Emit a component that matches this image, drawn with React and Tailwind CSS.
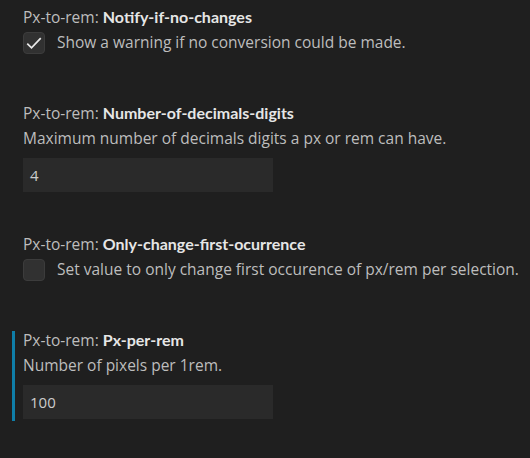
import React from "react";

const font = { fontFamily: '"Open Sans", "Noto Sans", sans-serif' };
const boldFont = { fontFamily: 'Lato, "Open Sans", sans-serif' };

const Check = ({ checked }) => (
  <div className="w-[22px] h-[22px] shrink-0 rounded-[4px] bg-[#313131] border border-[#3c3c3c] flex items-center justify-center">
    {checked && (
      <svg width="18" height="18" viewBox="0 0 16 16" fill="none">
        <path d="M2 8.5l3.8 3.8L14 3.6" stroke="#e8e8e8" strokeWidth="1.5" />
      </svg>
    )}
  </div>
);

const Title = ({ name }) => (
  <div className="text-[15.5px] leading-[20px] text-[#bdbdbd] whitespace-nowrap">
    Px-to-rem:{" "}
    <span className="font-bold text-[16px] text-[#e6e6e6]" style={boldFont}>
      {name}
    </span>
  </div>
);

const CheckSetting = ({ name, label, checked }) => (
  <div className="pl-[23px] pt-[7px] h-[96px]">
    <Title name={name} />
    <div className="flex items-center gap-[12px] mt-[4px]">
      <Check checked={checked} />
      <span className="text-[15.5px] text-[#bdbdbd] whitespace-nowrap">{label}</span>
    </div>
  </div>
);

const InputSetting = ({ name, desc, value, focused }) => (
  <div className="relative pl-[23px] pt-[7px] h-[131px]">
    {focused && <div className="absolute left-[12px] top-[8px] w-[3px] h-[90px] bg-[#0f7ea8]" />}
    <Title name={name} />
    <div className="text-[15.5px] leading-[20px] text-[#bdbdbd] mt-[5px] whitespace-nowrap">{desc}</div>
    <div className="mt-[10px] w-[250px] h-[34px] bg-[#2a2a2a] flex items-center px-[7px] text-[15px] text-[#cccccc]">
      {value}
    </div>
  </div>
);

export default function App() {
  return (
    <div className="w-[530px] h-[458px] bg-[#1f1f1f] overflow-hidden" style={font}>
      <CheckSetting name="Notify-if-no-changes" label="Show a warning if no conversion could be made." checked />
      <InputSetting name="Number-of-decimals-digits" desc="Maximum number of decimals digits a px or rem can have." value="4" />
      <CheckSetting name="Only-change-first-ocurrence" label="Set value to only change first occurence of px/rem per selection." />
      <InputSetting name="Px-per-rem" desc="Number of pixels per 1rem." value="100" focused />
    </div>
  );
}
